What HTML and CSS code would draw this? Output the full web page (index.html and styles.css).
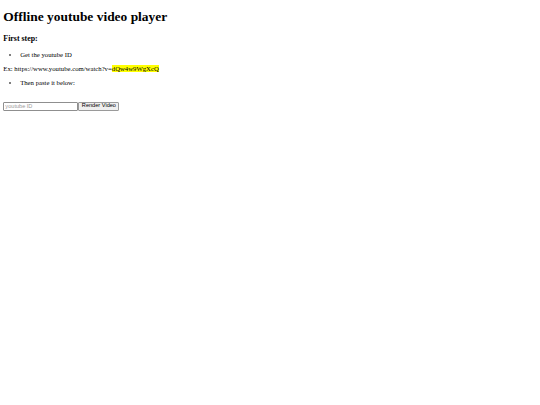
FILE: index.html
```html
<!DOCTYPE html>
<html>
<head>
<meta charset="utf-8">
<title>Offline youtube video player</title>
<link rel="stylesheet" href="styles.css">
</head>
<body>
<h1 class="title">Offline youtube video player</h1>
<h3 class="step">First step:</h3>
<ul class="list"><li>Get the youtube ID</li></ul>
<p class="example">Ex: https://www.youtube.com/watch?v=<mark class="hl">dQw4w9WgXcQ</mark></p>
<ul class="list"><li>Then paste it below:</li></ul>
<div class="form">
<input class="field" type="text" placeholder="youtube ID"><button class="btn" type="button">Render Video</button>
</div>
</body>
</html>
```
FILE: styles.css
```css
html { background: #fff; }
body {
  margin: 3.36px;
  font-family: "Liberation Serif", "Times New Roman", serif;
  font-size: 6.72px;
  line-height: normal;
  color: #000;
}
.title {
  font-size: 2em;
  font-weight: bold;
  margin: 6px 0 9px;
}
.step {
  font-size: 1.17em;
  font-weight: bold;
  margin: 1em 0;
}
.list {
  margin: 1em 0;
  padding-left: 16.8px;
}
.list li::marker {
  color: #555;
}
.example {
  margin: 1em 0;
  padding-top: 0.5px;
}
.hl {
  background: #ffff00;
  color: #000;
}
.form {
  margin-top: 15.5px;
  display: flex;
  align-items: stretch;
}
.field {
  box-sizing: border-box;
  width: 75px;
  height: 9px;
  margin: 0;
  padding: 0 1px;
  border: 1px solid #8f8f8f;
  border-radius: 1px;
  font-family: "Liberation Sans", Arial, sans-serif;
  font-size: 5.6px;
  color: #000;
  background: #fff;
}
.field::placeholder { color: #9a9a9a; }
.btn {
  box-sizing: border-box;
  height: 9px;
  margin: 0;
  padding: 0 2.5px;
  border: 1px solid #9a9a9a;
  border-radius: 1px;
  background: #efefef;
  font-family: "Liberation Sans", Arial, sans-serif;
  font-size: 5.6px;
  color: #000;
  line-height: 1;
}
```
